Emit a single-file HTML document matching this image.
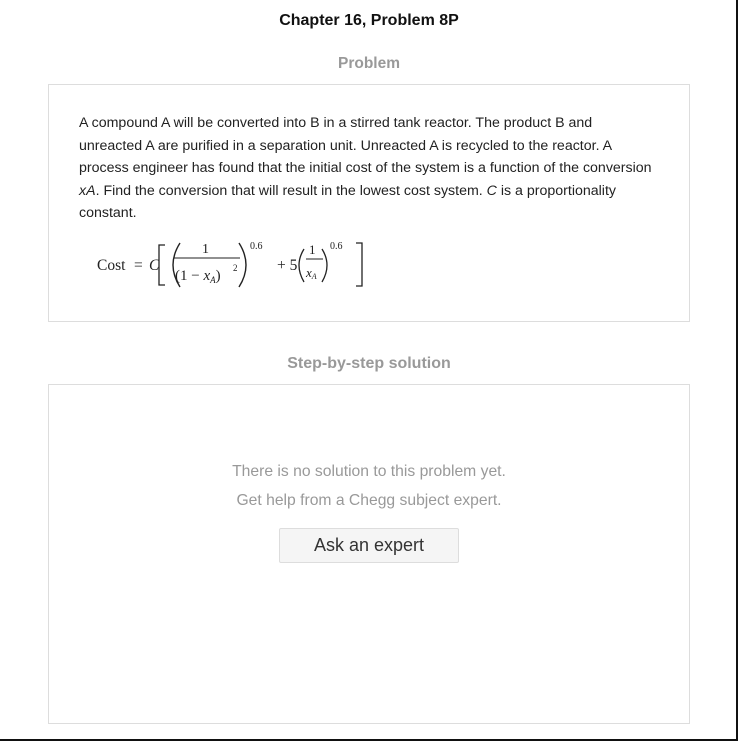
<!DOCTYPE html>
<html><head><style>
body{margin:0;width:738px;height:741px;position:relative;background:#fff;font-family:"Liberation Sans",sans-serif;overflow:hidden}
.a{position:absolute}
.box{position:absolute;border:1px solid #ddd;box-sizing:border-box}
.c{text-align:center;left:0;width:738px}
.p{left:79px;width:620px;font-size:14.2px;line-height:22.6px;color:#222;white-space:nowrap}
</style></head><body>
<div style="position:absolute;right:0;top:0;width:2px;height:741px;background:#111"></div>
<div style="position:absolute;left:0;bottom:0;width:738px;height:2px;background:#111"></div>
<div class="a c" style="top:12px;font-size:16px;font-weight:bold;color:#111">Chapter 16, Problem 8P</div>
<div class="a c" style="top:55px;font-size:15.5px;font-weight:bold;color:#999">Problem</div>
<div class="box" style="left:48px;top:84px;width:642px;height:238px"></div>
<div class="a p" style="top:112px">A compound A will be converted into B in a stirred tank reactor. The product B and<br>unreacted A are purified in a separation unit. Unreacted A is recycled to the reactor. A<br>process engineer has found that the initial cost of the system is a function of the conversion<br><i>xA</i>. Find the conversion that will result in the lowest cost system. <i>C</i> is a proportionality<br>constant.</div>
<svg class="a" style="left:0;top:226px" width="400" height="70" viewBox="0 225 400 70">
<g font-family="Liberation Serif" fill="#222">
<text x="97" y="269" font-size="15.5">Cost</text>
<text x="134" y="269" font-size="15.5">=</text>
<text x="149" y="269" font-size="15.5" font-style="italic">C</text>
<path d="M165 244 H159 V284 H165" stroke="#222" fill="none" stroke-width="1.3"/>
<path d="M180 242 Q166 264 180 286" stroke="#222" fill="none" stroke-width="1.4"/>
<text x="202" y="252" font-size="14">1</text>
<line x1="174" y1="257" x2="240" y2="257" stroke="#222" stroke-width="0.9"/>
<text x="175" y="279" font-size="15">(1 − <tspan font-style="italic">x</tspan><tspan font-size="9" font-style="italic" dy="3">A</tspan><tspan dy="-3">)</tspan></text>
<text x="233" y="270" font-size="9">2</text>
<path d="M239 242 Q253 264 239 286" stroke="#222" fill="none" stroke-width="1.4"/>
<text x="250" y="248" font-size="10">0.6</text>
<text x="277" y="269" font-size="15.5">+ 5</text>
<path d="M304 248 Q294 264 304 281" stroke="#222" fill="none" stroke-width="1.3"/>
<text x="309" y="253" font-size="13">1</text>
<line x1="306" y1="258" x2="323" y2="258" stroke="#222" stroke-width="0.9"/>
<text x="306" y="276" font-size="13" font-style="italic">x<tspan font-size="8" dy="2">A</tspan></text>
<path d="M322 248 Q332 264 322 281" stroke="#222" fill="none" stroke-width="1.3"/>
<text x="330" y="248" font-size="10">0.6</text>
<path d="M356 242 H362 V285 H356" stroke="#222" fill="none" stroke-width="1.3"/>
</g></svg>
<div class="a c" style="top:355px;font-size:16px;font-weight:bold;color:#999">Step-by-step solution</div>
<div class="box" style="left:48px;top:384px;width:642px;height:340px"></div>
<div class="a c" style="top:463px;font-size:15.7px;color:#999">There is no solution to this problem yet.</div>
<div class="a c" style="top:492px;font-size:15.7px;color:#999">Get help from a Chegg subject expert.</div>
<div class="a" style="left:279px;top:528px;width:180px;height:35px;box-sizing:border-box;border:1px solid #ddd;border-radius:2px;background:#f5f5f5;text-align:center;line-height:33px;font-size:18px;color:#333">Ask an expert</div>
</body></html>
